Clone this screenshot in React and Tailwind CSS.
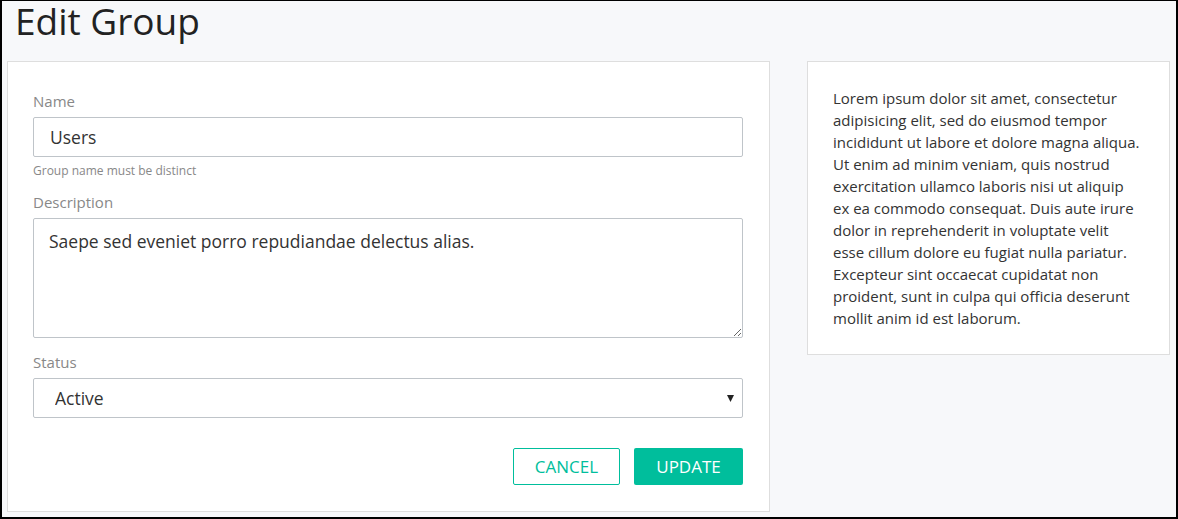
import { useState } from 'react';

const font = { fontFamily: '"Open Sans", "Noto Sans", sans-serif' };

const lorem =
    'Lorem ipsum dolor sit amet, consectetur adipisicing elit, sed do eiusmod tempor incididunt ut labore et dolore magna aliqua. Ut enim ad minim veniam, quis nostrud exercitation ullamco laboris nisi ut aliquip ex ea commodo consequat. Duis aute irure dolor in reprehenderit in voluptate velit esse cillum dolore eu fugiat nulla pariatur. Excepteur sint occaecat cupidatat non proident, sunt in culpa qui officia deserunt mollit anim id est laborum.';

const EditGroup = () => {
    const [name, setName] = useState('Users');
    const [description, setDescription] = useState('Saepe sed eveniet porro repudiandae delectus alias.');
    const [status, setStatus] = useState('Active');

    return (
        <div
            style={font}
            className="w-[1178px] h-[519px] box-border overflow-hidden bg-[#f7f8fa] border-black border-t border-l-2 border-r-2 border-b-2"
        >
            <h1 className="pl-[13px] text-[37px] leading-[40px] text-[#222] font-normal">Edit Group</h1>

            <div className="flex items-start gap-[37px] pl-[5px] mt-[20px]">
                <div className="w-[763px] bg-white border border-[#dedede] pl-[25px] pr-[26px] pt-[29px] pb-[26px]">
                    <label className="block text-[15px] leading-[20px] text-[#888]">Name</label>
                    <input
                        type="text"
                        value={name}
                        onChange={(e) => setName(e.target.value)}
                        className="mt-[6px] block w-full h-[40px] border border-[#bfc4c9] rounded-[2px] px-[16px] text-[17.5px] text-[#333] outline-none"
                    />
                    <p className="mt-[6px] text-[12px] leading-[16px] text-[#888]">Group name must be distinct</p>

                    <label className="mt-[13px] block text-[15px] leading-[20px] text-[#888]">Description</label>
                    <textarea
                        value={description}
                        onChange={(e) => setDescription(e.target.value)}
                        className="mt-[6px] block w-full h-[120px] border border-[#bfc4c9] rounded-[2px] px-[15px] pt-[10px] text-[17.5px] leading-[24px] text-[#333] outline-none"
                    />

                    <label className="mt-[14px] block text-[15px] leading-[20px] text-[#888]">Status</label>
                    <div className="relative mt-[6px]">
                        <select
                            value={status}
                            onChange={(e) => setStatus(e.target.value)}
                            className="block w-full h-[40px] appearance-none bg-white border border-[#bfc4c9] rounded-[2px] pl-[21px] text-[17.5px] text-[#333] outline-none"
                        >
                            <option>Active</option>
                            <option>Inactive</option>
                        </select>
                        <svg className="absolute right-[9px] top-[17px] pointer-events-none" width="7" height="7" viewBox="0 0 7 7">
                            <path d="M0 0 L7 0 L3.5 7 Z" fill="#222" />
                        </svg>
                    </div>

                    <div className="mt-[30px] flex justify-end gap-[14px]">
                        <button className="w-[107px] h-[37px] border border-[#00be9c] rounded-[2px] text-[#00be9c] text-[17px] uppercase bg-white">
                            Cancel
                        </button>
                        <button className="w-[109px] h-[37px] rounded-[2px] bg-[#00be9c] text-white text-[17px] uppercase">
                            Update
                        </button>
                    </div>
                </div>

                <div className="w-[363px] bg-white border border-[#dedede] pl-[25px] pr-[28px] pt-[25px] pb-[25px]">
                    <p className="text-[15px] leading-[22px] text-[#333]">{lorem}</p>
                </div>
            </div>
        </div>
    );
};

export default EditGroup;
